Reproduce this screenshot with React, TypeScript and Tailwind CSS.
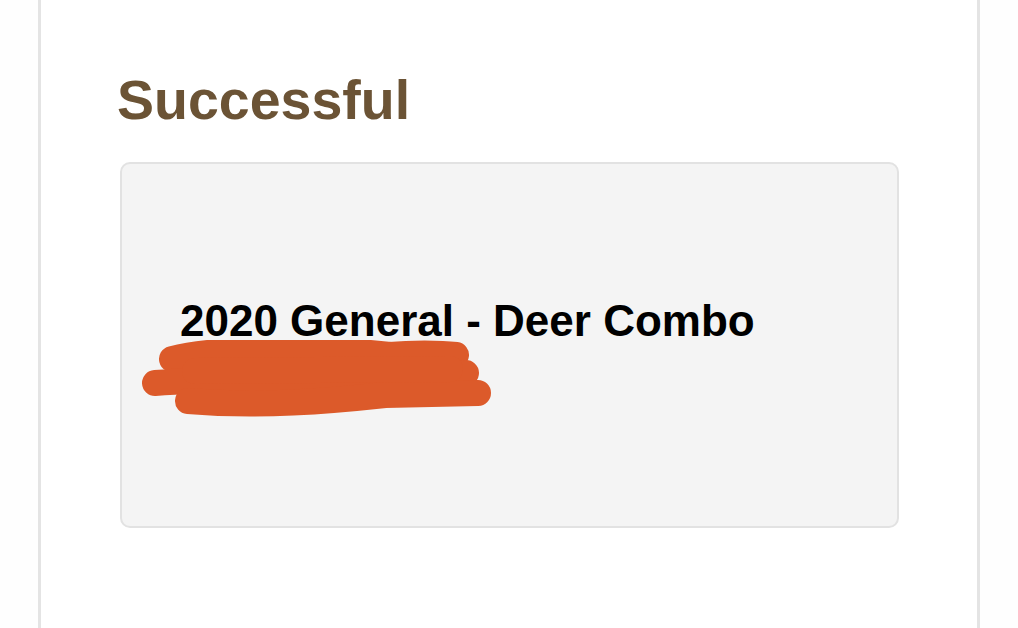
export default function App() {
  return (
    <div className="min-h-[628px] w-full overflow-hidden bg-[#fefefe]" style={{ fontFamily: '"Liberation Sans", Arial, sans-serif' }}>
      <div className="ml-[38px] h-[628px] w-[942px] border-x-[3px] border-[#e4e4e4] bg-white">
        <h1 className="ml-[76px] pt-[73px] text-[55.5px] font-bold leading-none text-[#6b5335]">Successful</h1>
        <div className="relative ml-[79px] mt-[33px] h-[366px] w-[779px] rounded-[10px] border-2 border-[#e2e2e2] bg-[#f4f4f4] pl-[58px] pt-[135px]">
          <p className="text-[44px] font-bold leading-none text-black">2020 General - Deer Combo</p>
          {/* redaction scribble */}
          <svg className="absolute left-[-2px] top-[176px]" width="380" height="90" viewBox="120 337 380 90">
            <g stroke="#dc5a2a" strokeWidth="26" strokeLinecap="round" strokeLinejoin="round" fill="none">
              <path d="M172 356 C 220 344, 320 344, 390 352 C 410 350, 440 350, 456 352" />
              <path d="M155 380 C 250 374, 380 374, 466 370" />
              <path d="M188 398 C 260 404, 330 398, 385 392 L 478 390" />
              <path d="M195 368 L 450 366" />
            </g>
          </svg>
        </div>
      </div>
    </div>
  );
}
